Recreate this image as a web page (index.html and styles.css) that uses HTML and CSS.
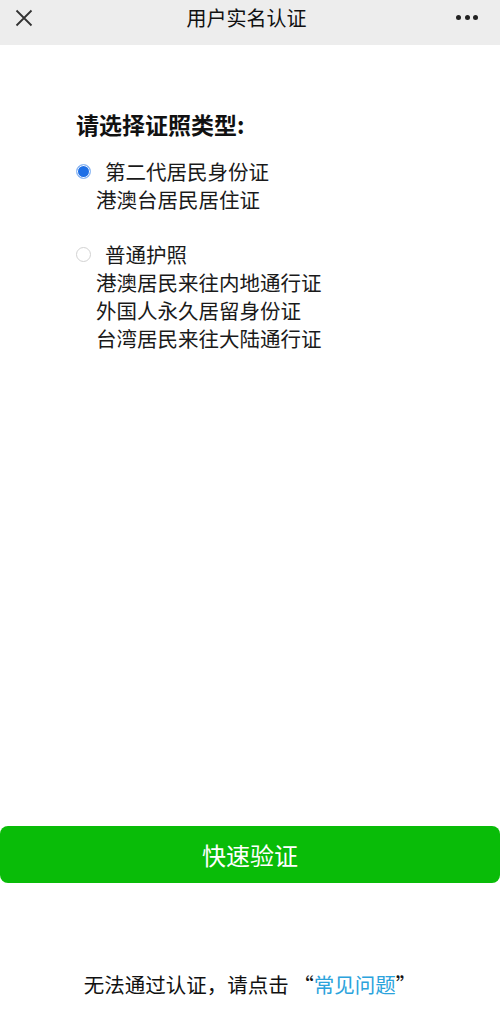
FILE: index.html
```html
<!DOCTYPE html>
<html lang="zh">
<head>
<meta charset="utf-8">
<title>用户实名认证</title>
<link rel="stylesheet" href="styles.css">
</head>
<body>
<div class="page">
  <header class="nav">
    <span class="nav-close">
      <svg width="18" height="18" viewBox="0 0 18 18"><path d="M1.5 1.5 L16.5 16.5 M16.5 1.5 L1.5 16.5" stroke="#333" stroke-width="1.8" fill="none"/></svg>
    </span>
    <h1 class="nav-title">用户实名认证</h1>
    <span class="nav-more"><i></i><i></i><i></i></span>
  </header>

  <main class="content">
    <h2 class="heading">请选择证照类型:</h2>
    <div class="option">
      <div class="option-row"><span class="radio radio-on"></span><span class="option-main">第二代居民身份证</span></div>
      <div class="option-sub">港澳台居民居住证</div>
    </div>
    <div class="option option-second">
      <div class="option-row"><span class="radio"></span><span class="option-main">普通护照</span></div>
      <div class="option-sub">港澳居民来往内地通行证</div>
      <div class="option-sub">外国人永久居留身份证</div>
      <div class="option-sub">台湾居民来往大陆通行证</div>
    </div>
  </main>

  <div class="action">
    <button class="btn">快速验证</button>
  </div>

  <footer class="foot">无法通过认证，请点击 “<span class="link">常见问题</span>”</footer>
</div>
</body>
</html>
```

FILE: styles.css
```css
html, body {
  margin: 0;
  padding: 0;
  background: #fff;
}
body {
  font-family: "Noto Sans CJK SC", "Noto Sans", sans-serif;
  color: #111;
}
.page {
  width: 500px;
  height: 1025px;
  display: flex;
  flex-direction: column;
}
.nav {
  height: 45px;
  background: #ededed;
  display: grid;
  grid-template-columns: 1fr auto 1fr;
  align-items: center;
  padding: 0 22px 10px 15px;
  box-sizing: border-box;
  flex-shrink: 0;
}
.nav-close {
  width: 18px;
  height: 18px;
  display: flex;
}
.nav-title {
  margin: 0;
  font-size: 20px;
  font-weight: 400;
  color: #111;
  line-height: 1;
}
.nav-more {
  display: flex;
  gap: 3.5px;
  justify-self: end;
}
.nav-more i {
  width: 5px;
  height: 5px;
  border-radius: 50%;
  background: #222;
}
.content {
  padding: 63px 0 0 76px;
  flex: 1;
}
.heading {
  margin: 0 0 17px;
  font-size: 23px;
  font-weight: 700;
  line-height: 32px;
  color: #111;
}
.option-row {
  display: flex;
  align-items: center;
  height: 28px;
}
.radio {
  width: 13px;
  height: 13px;
  border-radius: 50%;
  border: 1px solid #d2d2d2;
  box-sizing: content-box;
  margin-right: 14px;
}
.radio-on {
  border: 1px solid #9cc2f5;
  background: #1e6fe6;
  box-shadow: inset 0 0 0 1px #fff;
}
.option-main, .option-sub {
  font-size: 20.5px;
  line-height: 28px;
  color: #1a1a1a;
}
.option-sub {
  padding-left: 20px;
}
.option-second {
  margin-top: 27px;
}
.action {
  flex-shrink: 0;
}
.btn {
  display: block;
  width: 500px;
  height: 57px;
  border: none;
  border-radius: 8px;
  background: #09bc08;
  color: #fff;
  font-family: "Noto Sans CJK SC", "Noto Sans", sans-serif;
  font-size: 24px;
  padding: 0;
}
.foot {
  height: 142px;
  box-sizing: border-box;
  padding-top: 86px;
  text-align: center;
  font-size: 20.5px;
  color: #111;
  flex-shrink: 0;
}
.link {
  color: #2ba3dc;
}
```
